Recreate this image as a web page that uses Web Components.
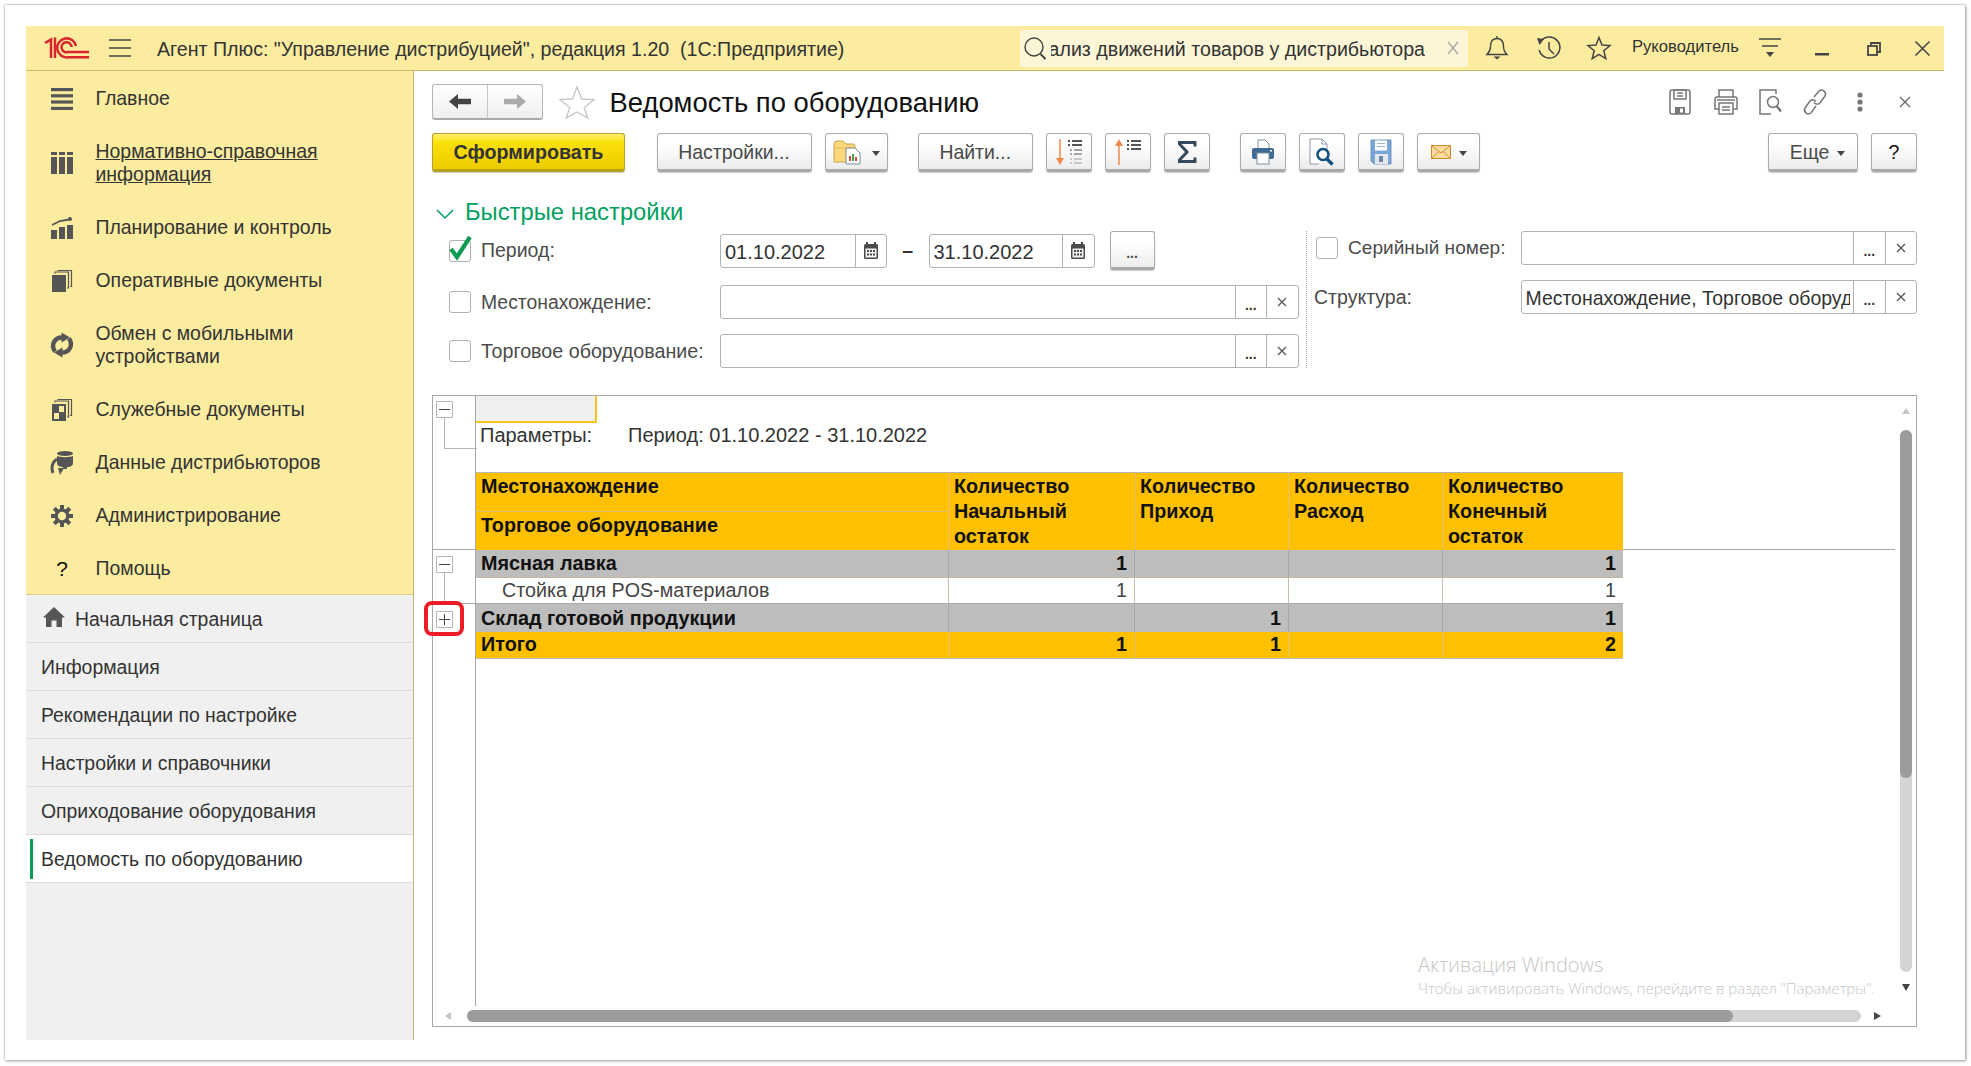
<!DOCTYPE html>
<html lang="ru"><head><meta charset="utf-8"><title>Ведомость по оборудованию</title>
<style>
html,body{margin:0;padding:0;background:#fff;width:1971px;height:1066px;overflow:hidden}
body{font-family:"Liberation Sans",Arial,sans-serif;font-size:19.5px;color:#333}
</style>
<script>
const gearTeeth=[0,45,90,135].map(a=>`<rect x="9" y="0" width="4" height="22" fill="currentColor" transform="rotate(${a} 11 11)"/>`).join('');
const ICONS={
 logo:[44,22,`<g fill="none" stroke="#d9252b" stroke-width="2.5"><path d="M0 6 L6 2.4V21M10 0.5V21"/><path d="M31 9A9.5 9.5 0 1 0 23 20.3H44"/><path d="M26.5 10A5 5 0 1 0 23 15H44"/></g>`],
 burger:[22,18,`<g stroke="#444" stroke-width="1.4"><path d="M0 1h22M0 9h22M0 17h22"/></g>`],
 search:[23,23,`<g fill="none" stroke="#444" stroke-width="1.4"><circle cx="10" cy="10" r="9"/><path d="M16.5 17l5 5" stroke-width="2"/></g>`],
 clear:[12,14,`<path d="M1 1l10 12M11 1L1 13" stroke="#aaa" stroke-width="1.4" fill="none"/>`],
 bell:[22,24,`<g fill="none" stroke="#444" stroke-width="1.4"><path d="M11 2.5c-5 0-6.500 4-6.500 8 0 4-1.500 6-3.500 8h20c-2-2-3.500-4-3.500-8 0-4-1.500-8-6.500-8z"/><path d="M11 0v2.500"/></g><path d="M7.500 20.500h7l-3.500 3z" fill="#444"/>`],
 history:[24,24,`<g fill="none" stroke="#444" stroke-width="1.5"><path d="M3.500 6A10.500 10.500 0 1 1 2.200 14"/><path d="M12 6v7l5 5"/></g><path d="M0 2l7 1-4.500 6z" fill="#444"/>`],
 star:[24,24,`<path d="M12 1.500l3 7.500 8 .6-6.200 5.200 2 7.900L12 18.400l-6.800 4.300 2-7.900L1 9.600l8-.6z" fill="none" stroke="#444" stroke-width="1.5"/>`],
 funnel:[22,21,`<g stroke="#444" stroke-width="1.4"><path d="M0 1h22M3 8h16"/></g><path d="M7 14h8l-4 5z" fill="#444"/>`],
 min:[14,3,`<rect width="14" height="2.500" fill="#444"/>`],
 restore:[14,14,`<g fill="none" stroke="#444" stroke-width="1.800"><rect x="1" y="4" width="9" height="9"/><path d="M4 3V1h9v9h-2.500"/></g>`],
 close:[15,15,`<path d="M.5.5l14 14M14.500.5l-14 14" stroke="#444" stroke-width="1.500"/>`],
 main:[22,22,`<g fill="#555"><rect y="0" width="22" height="3.200"/><rect y="6.200" width="22" height="3.200"/><rect y="12.400" width="22" height="3.200"/><rect y="18.800" width="22" height="3.200"/></g>`],
 nsi:[22,22,`<g fill="#555"><rect width="6" height="3"/><rect x="8" width="6" height="3"/><rect x="16" width="6" height="3"/><rect y="5" width="6" height="17"/><rect x="8" y="5" width="6" height="17"/><rect x="16" y="5" width="6" height="17"/></g>`],
 plan:[22,22,`<g fill="#555"><rect y="13" width="6" height="9"/><rect x="8" y="10" width="6" height="12"/><rect x="16" y="8" width="6" height="14"/></g><path d="M1 8l8-4 9-1.500" fill="none" stroke="#555" stroke-width="1.800"/><circle cx="19" cy="2" r="2" fill="#555"/>`],
 docs:[20,22,`<rect x="0" y="5" width="14" height="17" fill="#555"/><path d="M3 3.500V2h13.500v16H15M6 1V.5h13.500v16H18" fill="none" stroke="#555" stroke-width="1.200"/>`],
 sync:[22,22,`<g fill="none" stroke="#555" stroke-width="4.400"><path d="M4 17.500C-.5 11 3.500 3.500 11 3.500"/><path d="M18 4.500C22.500 11 18.500 18.500 11 18.500"/></g><path d="M10.500 -1.500L19 3.500 10.500 8.500zM11.500 23.500L3 18.500 11.500 13.500z" fill="#555"/>`],
 svc:[20,22,`<rect x="0" y="5" width="14" height="17" fill="#555"/><rect x="7" y="7" width="5" height="6" fill="#fbeca0"/><rect x="2" y="14" width="5" height="6" fill="#fbeca0"/><path d="M3 3.500V2h13.500v16H15M6 1V.5h13.500v16H18" fill="none" stroke="#555" stroke-width="1.200"/>`],
 dist:[24,24,`<g fill="#555"><ellipse cx="15" cy="2.500" rx="8" ry="2.500"/><path d="M7 5c2 1.500 14 1.500 16 0v7c0 3-3 4-6 4v2h-4v-2c-3 0-6-1-6-4z"/></g><path d="M7 8A11 11 0 0 0 3 22" fill="none" stroke="#555" stroke-width="3"/><path d="M10 24l4-7h-6z" fill="#555"/>`],
 gear:[22,22,`<g style="color:#555">${gearTeeth}</g><circle cx="11" cy="11" r="7.500" fill="#555"/><circle cx="11" cy="11" r="4.200" fill="#fbeca0"/>`],
 home:[22,20,`<path d="M11 0L22 10.500h-3V20h-5.500v-6.500h-5V20H3v-9.500H0z" fill="#555"/>`],
 back:[22,15,`<path d="M0 7.500L9 0v4.800h13v5.400H9V15z" fill="#444"/>`],
 fwd:[22,15,`<path d="M22 7.500L13 0v4.800H0v5.400h13V15z" fill="#aaa"/>`],
 bigstar:[36,33,`<path d="M18 1l4.600 12L35 13.600l-9.700 8 3.400 10.400L18 26l-10.700 6 3.400-10.400-9.700-8L13.400 13z" fill="#fff" stroke="#c4c4c4" stroke-width="1.300"/>`],
 sSave:[22,26,`<g fill="none" stroke="#777" stroke-width="1.500"><rect x="1" y="1" width="20" height="24" rx="2"/><rect x="5" y="1" width="12" height="9"/><path d="M8 4h6M8 7h6"/></g><rect x="6" y="18" width="10" height="7" fill="#777"/><rect x="11" y="19.500" width="3" height="4" fill="#fff"/>`],
 sPrint:[24,26,`<g fill="none" stroke="#777" stroke-width="1.500"><path d="M5 8V1h14v7"/><path d="M5 20H1V10a2 2 0 0 1 2-2h18a2 2 0 0 1 2 2v10h-4"/><rect x="5" y="14" width="14" height="11"/><path d="M8 18h8M8 21h8M3 11h18"/></g>`],
 sPrev:[23,26,`<g fill="none" stroke="#777" stroke-width="1.500"><path d="M12 25H1V1h16v4"/><circle cx="14" cy="13" r="5.500"/><path d="M18 17.500l4 5" stroke-width="2.400"/></g>`],
 sLink:[24,26,`<g fill="none" stroke="#777" stroke-width="1.500"><path d="M11 8l5-6a4 4 0 0 1 6 5l-5 7a4 4 0 0 1-6-.5"/><path d="M13 17l-5 7a4 4 0 0 1-6-5l5-7a4 4 0 0 1 6 .5"/></g>`],
 sDots:[6,20,`<g fill="#777"><circle cx="3" cy="3" r="2.600"/><circle cx="3" cy="10" r="2.600"/><circle cx="3" cy="17" r="2.600"/></g>`],
 sClose:[12,12,`<path d="M1 1l10 10M11 1L1 11" stroke="#666" stroke-width="1.300"/>`],
 folder:[31,24,`<path d="M1 4q0-3 3-3h5q2 0 3 2l1 1h7q2 0 2 2v16H1z" fill="#fbd97a" stroke="#c9a24a"/><path d="M1 8h21" stroke="#e9b94f" stroke-width="1"/><path d="M13 8h9l5 5v11H13z" fill="#fff" stroke="#7c8d9a"/><g><rect x="16" y="16" width="2" height="5" fill="#d5493b"/><rect x="19" y="14" width="2" height="7" fill="#3fa34d"/><rect x="22" y="17" width="2" height="4" fill="#d5493b"/></g>`],
 sortD:[26,26,`<path d="M4 0v23" stroke="#f08a4b" stroke-width="1.500"/><path d="M0 19h8l-4 7z" fill="#f08a4b"/><g stroke="#555" stroke-width="1.800"><path d="M12 2h2M16 2h10M12 6h2M16 6h10"/></g><g stroke="#888" stroke-width="1.600"><path d="M14 11h2M18 11h8M14 15h2M18 15h8"/></g><g stroke="#bbb" stroke-width="1.600"><path d="M14 20h2M18 20h8M14 24h2M18 24h8"/></g>`],
 sortU:[26,26,`<path d="M4 3v23" stroke="#f08a4b" stroke-width="1.500"/><path d="M0 7h8l-4-7z" fill="#f08a4b"/><g stroke="#555" stroke-width="1.800"><path d="M12 2h2M16 2h10M12 6h2M16 6h10M12 10h2M16 10h10" /></g>`],
 sum:[18,22,`<path d="M17 5.500V1.500H1.500V3l7.500 8-7.500 8v1.500H17v-4" fill="none" stroke="#34495e" stroke-width="3"/>`],
 print:[22,26,`<path d="M6 10V1h7l4 4v5" fill="#fff" stroke="#7d8d9c"/><rect x="0" y="9" width="22" height="11" rx="2" fill="#3f6b94"/><rect x="18" y="11" width="2" height="1.500" fill="#fff"/><rect x="5" y="14" width="12" height="11" fill="#fff" stroke="#7d8d9c"/>`],
 prev:[24,27,`<path d="M17 13V5l-5-5H0v25h9" fill="#fff" stroke="#8a98a6"/><path d="M12 0v5h5" fill="none" stroke="#8a98a6"/><circle cx="13" cy="15.500" r="5.500" fill="#fff" stroke="#14507e" stroke-width="2.600"/><path d="M17 20l5.500 5.500" stroke="#14507e" stroke-width="3.400"/>`],
 save:[20,24,`<path d="M0 0h20v24H3l-3-3z" fill="#7ba7d8" stroke="#5b87b5" stroke-width=".8"/><rect x="4" y="0.500" width="12" height="10" fill="#fff"/><path d="M6 3.500h8M6 6.500h8" stroke="#9db4cd"/><rect x="4" y="14" width="13" height="10" fill="#e2e8ee"/><rect x="8" y="16" width="4" height="6" fill="#6c8aa8"/>`],
 mail:[20,14,`<rect x=".5" y=".5" width="19" height="13" fill="#fbdc9e" stroke="#cc8d2e"/><path d="M.5.5L10 8 19.500.5M.5 13.500L8 6.500M19.500 13.500L12 6.500" fill="none" stroke="#cc8d2e"/>`],
 cal:[14,17,`<rect x="0" y="2" width="14" height="15" rx="1.500" fill="#4a4a4a"/><rect x="2" y="0" width="2" height="4" fill="#4a4a4a"/><rect x="10" y="0" width="2" height="4" fill="#4a4a4a"/><rect x="1.500" y="6.500" width="11" height="9" fill="#f4f4f4"/><g fill="#4a4a4a"><rect x="3" y="8" width="2" height="2"/><rect x="6" y="8" width="2" height="2"/><rect x="9" y="8" width="2" height="2"/><rect x="3" y="11.500" width="2" height="2"/><rect x="6" y="11.500" width="2" height="2"/><rect x="9" y="11.500" width="2" height="2"/></g>`],
 chev:[18,10,`<path d="M1 1l8 8 8-8" fill="none" stroke="#00a060" stroke-width="1.500"/>`],
 check:[24,26,`<path d="M2 14l6 8L21 2" fill="none" stroke="#0b9a52" stroke-width="4.200"/>`],
 tx:[10,10,`<path d="M1 1l8 8M9 1L1 9" stroke="#555" stroke-width="1.300"/>`]
};
function def(name,render){customElements.define(name,class extends HTMLElement{connectedCallback(){if(this.shadowRoot)return;const r=this.attachShadow({mode:"open"});r.innerHTML=render(this)}})}
def('ui-icon',el=>{const[w,h,b]=ICONS[el.getAttribute('name')];return `<style>:host{display:inline-flex;flex:none;line-height:0}svg{display:block;overflow:visible}</style><svg width="${w}" height="${h}" viewBox="0 0 ${w} ${h}">${b}</svg>`});

def('app-window',()=>`<style>:host{display:block;box-sizing:border-box;width:1960px;height:1055px;margin:5px 0 0 5px;padding:21px 21px 20px;background:#fff;box-shadow:0 0 2px #9a9a9a,1px 1px 3px #aaa}
.col{display:flex;flex-direction:column;height:100%}.row{display:flex;flex:1;min-height:0}</style>
<div class="col"><slot name="head"></slot><div class="row"><slot name="side"></slot><slot name="main"></slot></div></div>`);

def('app-header',()=>`<style>:host{display:flex;align-items:center;box-sizing:border-box;height:45px;width:1918px;flex:none;background:#fbeca0;border-bottom:1px solid #cdb968;color:#333;font-size:19.600px}
.logo{margin-left:19px}.burger{margin-left:20px}.title{margin-left:26px;white-space:pre;width:863px;padding-top:2px}
.search{box-sizing:border-box;display:flex;align-items:center;width:448px;height:37px;background:#fdf6d6;border-radius:3px;padding-left:4px}
.q{flex:none;display:flex;justify-content:flex-end;overflow:hidden;width:374px;margin-left:4px;white-space:nowrap;padding-top:2px}
.x{margin-left:22px}.bell{margin-left:18px}.hist{margin-left:29px}.star{margin-left:26px}
.user{margin-left:21px;font-size:16.600px;width:106px;position:relative;top:-1px;white-space:nowrap}.fun{margin-left:21px}.min{margin-left:34px;margin-top:13px}.res{margin-left:38px;margin-top:2px}.cl{margin-left:34px}</style>
<ui-icon class="logo" name="logo"></ui-icon><ui-icon class="burger" name="burger"></ui-icon>
<span class="title">Агент Плюс: "Управление дистрибуцией", редакция 1.20  (1С:Предприятие)</span>
<div class="search"><ui-icon name="search"></ui-icon><div class="q"><span>Анализ движений товаров у дистрибьютора</span></div><ui-icon class="x" name="clear"></ui-icon></div>
<ui-icon class="bell" name="bell"></ui-icon><ui-icon class="hist" name="history"></ui-icon><ui-icon class="star" name="star"></ui-icon>
<span class="user">Руководитель</span><ui-icon class="fun" name="funnel"></ui-icon><ui-icon class="min" name="min"></ui-icon><ui-icon class="res" name="restore"></ui-icon><ui-icon class="cl" name="close"></ui-icon>`);

def('side-bar',()=>`<style>:host{display:flex;flex-direction:column;box-sizing:border-box;width:388px;flex:none;background:#f0f0f0;border-right:1px solid #c4b878}
.sec{background:#fbeca0;border-bottom:1px solid #d9cb8a;height:522px;padding-top:1px}</style><div class="sec"><slot name="sec"></slot></div><slot></slot>`);

def('nav-item',el=>`<style>:host{display:flex;align-items:center;padding:15px 0 15px 25px;color:#333;line-height:23px;font-size:19.450px}
.i{width:22px;height:23px;display:flex;align-items:center;justify-content:center;flex:none;margin-right:22.500px}.q{font-size:21px;color:#111;line-height:22px}
.u{text-decoration:${el.hasAttribute('link')?'underline':'none'}}</style>
<span class="i">${el.getAttribute('icon')==='q'?'<span class="q">?</span>':`<ui-icon name="${el.getAttribute('icon')}"></ui-icon>`}</span><span class="u"><slot></slot></span>`);

def('tab-item',el=>{const act=el.hasAttribute('active');return `<style>:host{display:flex;align-items:center;box-sizing:border-box;height:48px;border-bottom:1px solid #dcdcdc;padding:2px 0 0 15px;position:relative;font-size:19.400px;background:${act?'#fff':'transparent'}}
.bar{width:3px;position:absolute;left:3.500px;top:4px;bottom:3px;background:#0a9b55}ui-icon{margin:-5px 10px 0 2px}</style>
${act?'<span class="bar"></span>':''}${el.getAttribute('icon')?`<ui-icon name="${el.getAttribute('icon')}"></ui-icon>`:''}<slot></slot>`});

def('tool-btn',el=>{const p=el.hasAttribute('primary');return `<style>:host{display:inline-flex;align-items:center;justify-content:center;box-sizing:border-box;flex:none;height:39px;padding-top:1px;border-radius:3px;border:1px solid ${p?'#b8a22e':'#ababab'};border-bottom:3px solid ${p?'#b7a11a':'#a9a9a9'};
background:${p?'linear-gradient(#fff06a 0,#fbe10a 25%,#eccb00 100%)':'linear-gradient(#fff 30%,#ececec)'};color:${p?'#333':'#4a4a4a'};font-weight:${p?'bold':'normal'};font-size:${p?'19.700px':'19.450px'};box-shadow:0 1px 1px #ccc;white-space:nowrap}
.tri{display:inline-block;width:0;height:0;border:4.500px solid transparent;border-top:5px solid #444;border-bottom:0;margin-left:8px;margin-top:3px}</style><slot></slot>${el.hasAttribute('menu')?'<span class="tri"></span>':''}`});

def('check-box',el=>`<style>:host{display:inline-block;flex:none;box-sizing:border-box;width:22px;height:22px;border:1px solid #b0b0b0;border-radius:3px;background:#fff;position:relative}
ui-icon{position:absolute;left:-1px;top:-6px}</style>${el.hasAttribute('checked')?'<ui-icon name="check"></ui-icon>':''}`);

def('text-field',el=>{const b=(el.getAttribute('btn')||'').split(' ').filter(Boolean);const cell=k=>`<span class="b">${k==='cal'?'<ui-icon name="cal"></ui-icon>':k==='dots'?'<b class="d">...</b>':'<ui-icon name="tx"></ui-icon>'}</span>`;
return `<style>:host{display:flex;box-sizing:border-box;height:34px;flex:none;border:1px solid #b2b2b2;border-radius:3px;background:#fff;color:#333}
.v{flex:1;min-width:0;overflow:hidden;white-space:nowrap;padding-left:4px;margin-right:3px;line-height:34px;height:32px}
.b{flex:none;width:30.500px;border-left:1px solid #b2b2b2;display:flex;align-items:center;justify-content:center}.d{font-size:14px;color:#333;position:relative;top:3px}</style>
<span class="v">${el.getAttribute('value')||''}</span>${b.map(cell).join('')}`});

def('page-main',()=>`<style>:host{display:block;box-sizing:border-box;width:1530px;padding:13px 27px 0 18px}</style><slot></slot>`);

def('title-row',()=>`<style>:host{display:flex;align-items:center;height:36px}
.nav{box-sizing:border-box;width:110.500px;height:36px;display:flex;border:1px solid #b4b4b4;border-bottom:2px solid #aaa;border-radius:3px;background:linear-gradient(#fff,#efefef)}
.nav span{flex:1;display:flex;align-items:center;justify-content:center}.nav span+span{border-left:1px solid #c8c8c8}
.st{margin-left:16px}.t{margin-left:15px;font-size:27.400px;color:#111;flex:1;white-space:nowrap;padding-top:1px}.r{display:flex;align-items:center;margin-right:6px}
.i2{margin-left:23px}.i3{margin-left:21px}.i4{margin-left:21px}.i5{margin-left:30px}.i6{margin-left:36px}</style>
<div class="nav"><span><ui-icon name="back"></ui-icon></span><span><ui-icon name="fwd"></ui-icon></span></div>
<ui-icon class="st" name="bigstar"></ui-icon><span class="t">Ведомость по оборудованию</span>
<div class="r"><ui-icon name="sSave"></ui-icon><ui-icon class="i2" name="sPrint"></ui-icon><ui-icon class="i3" name="sPrev"></ui-icon><ui-icon class="i4" name="sLink"></ui-icon><ui-icon class="i5" name="sDots"></ui-icon><ui-icon class="i6" name="sClose"></ui-icon></div>`);

def('tool-bar',()=>`<style>:host{display:flex;margin-top:13px;height:39px}</style><slot></slot>`);

def('quick-head',()=>`<style>:host{display:flex;align-items:center;margin-top:27px;height:26px;color:#00a060;font-size:23.800px}ui-icon{margin:3px 11px 0 4px}</style><ui-icon name="chev"></ui-icon><slot></slot>`);

def('quick-form',()=>`<style>:host{display:flex;margin-top:6px;height:137px}
.l{box-sizing:border-box;width:875px;border-right:1px dotted #aaa;display:flex;flex-direction:column;gap:15px}
.rw{display:flex;align-items:center;flex:none}.lb{display:flex;align-items:center;flex:none;width:288px;padding-left:17px;box-sizing:border-box;color:#4b4b4b}.lb span{margin-left:10px;white-space:nowrap}
.dash{width:41.500px;text-align:center;flex:none;font-weight:bold}.rr{flex:1;padding-left:7px;display:flex;flex-direction:column;gap:15px}
.rb{display:flex;align-items:center;flex:none;width:206.500px;color:#4b4b4b;white-space:nowrap}.rb span{margin-left:10px}
.date{font-size:20px}.val{font-size:19.450px}</style>
<div class="l">
 <div class="rw" style="height:39px"><div class="lb"><check-box checked></check-box><span style="font-size:19.500px">Период:</span></div><text-field class="date" value="01.10.2022" btn="cal" style="width:167px"></text-field><span class="dash">–</span><text-field class="date" value="31.10.2022" btn="cal" style="width:166px"></text-field><tool-btn style="width:45px;margin-left:15px"><b style="font-size:14px;position:relative;top:3px">...</b></tool-btn></div>
 <div class="rw" style="height:34px"><div class="lb"><check-box></check-box><span style="font-size:19.400px">Местонахождение:</span></div><text-field btn="dots clear" style="width:578.500px"></text-field></div>
 <div class="rw" style="height:34px"><div class="lb"><check-box></check-box><span style="font-size:19.700px">Торговое оборудование:</span></div><text-field btn="dots clear" style="width:578.500px"></text-field></div>
</div>
<div class="rr">
 <div class="rw" style="height:34px"><div class="rb"><check-box style="margin-left:2px"></check-box><span style="font-size:19.100px">Серийный номер:</span></div><text-field btn="dots clear" style="width:396.500px"></text-field></div>
 <div class="rw" style="height:34px"><div class="rb">Структура:</div><text-field class="val" value="Местонахождение, Торговое оборудование" btn="dots clear" style="width:396.500px"></text-field></div>
</div>`);

def('tree-toggle',el=>`<style>:host{display:block;box-sizing:border-box;width:17px;height:17px;margin-left:3px;border:1px solid #b4b4b4;border-radius:1px;background:#fff;flex:none}svg{display:block}</style>
<svg width="15" height="15" viewBox="0 0 15 15"><path d="M2 7.500h11${el.getAttribute('state')==='plus'?'M7.500 2v11':''}" stroke="#444" stroke-width="1"/></svg>`);

def('report-sheet',()=>{
 const c=(t,cl='')=>`<div class="c ${cl}">${t}</div>`;
 const row=(kind,a,v)=>`${c(a,'first')}${v.map(x=>c(x,'n')).join('')}`;
 return `<style>:host{display:flex;flex-direction:column;height:100%;--cols:43px 472px 186px 154px 154px 181px;font-size:19.700px;color:#111;line-height:25px}
.g{box-sizing:border-box;border-right:1px solid #a8a8a8;position:relative;display:flex;flex-direction:column}
.gl{margin-left:11px;border-left:1px solid #b4b4b4;flex:none}
.rw{display:grid;grid-template-columns:var(--cols) 1fr;flex:none}
.top{height:76px;display:flex}.top .g{width:43px;padding-top:5px}
.box{box-sizing:border-box;width:121px;height:27px;background:#f0f0f0;border-right:2px solid #fcc21c;border-bottom:2px solid #fcc21c}
.par{display:flex;padding-left:4px;height:24px;line-height:24px;color:#333;white-space:nowrap;font-size:20px}.par span:first-child{width:148px}
.hd{height:77px;border-bottom:1px solid #a8a8a8}
.hc{background:#ffc000;font-weight:bold;font-size:19.800px;border-left:1px solid #dfc171;padding:1px 0 0 5px;border-top:1px solid #b5b5b5;box-sizing:border-box;white-space:nowrap}
.h1{padding:0;border-left:0;display:flex;flex-direction:column}.h1 div{box-sizing:border-box;height:38.500px;padding:1px 0 0 5px;line-height:25px}.h1 div:first-child{border-bottom:1px solid #dfc171}
.c{box-sizing:border-box;padding:0 7px 0 5px;display:flex;align-items:center;white-space:nowrap;border-left:1px solid transparent}.first{border-left:0}.n{justify-content:flex-end}
.gray .c{background:#bdbdbd;font-weight:bold;font-size:19.800px;border-bottom:1px solid #c4b79f}.gray .n{border-left-color:#a9a9a9}
.white .c{background:#fff;color:#444;border-bottom:1px solid #aaa}.white .n{border-left-color:#cabfae}.white .first{padding-left:26px}
.tot .c{background:#ffc000;font-weight:bold;font-size:19.800px;border-bottom:1px solid #c0c0c0}.tot .n{border-left-color:#dfc171}
.gray2 .c{border-bottom:0}
.rest{flex:1;display:flex}.rest .g{width:43px}
.hl{position:absolute;box-sizing:border-box;left:-9px;top:-3px;width:40px;height:35px;border:4px solid #ed1c24;border-radius:8px}
</style>
<div class="top"><div class="g"><tree-toggle></tree-toggle><div class="gl" style="height:30px;width:32px;border-bottom:1px solid #b4b4b4"></div></div>
 <div><div class="box"></div><div class="par"><span>Параметры:</span><span>Период: 01.10.2022 - 31.10.2022</span></div></div></div>
<div class="rw hd"><div class="g"></div>
 <div class="hc h1"><div>Местонахождение</div><div>Торговое оборудование</div></div>
 <div class="hc">Количество<br>Начальный<br>остаток</div><div class="hc">Количество<br>Приход</div><div class="hc">Количество<br>Расход</div><div class="hc">Количество<br>Конечный<br>остаток</div></div>
<div class="rw gray" style="height:28px"><div class="g" style="padding-top:6px"><tree-toggle></tree-toggle><div class="gl" style="height:5px"></div></div>${row('',"Мясная лавка",['1','','','1'])}</div>
<div class="rw white" style="height:26px"><div class="g" style="border-bottom:1px solid #aaa"><div class="gl" style="flex:1"></div></div>${row('',"Стойка для POS-материалов",['1','','','1'])}</div>
<div class="rw gray gray2" style="height:28px"><div class="g" style="padding-top:7px"><tree-toggle state="plus"></tree-toggle><span class="hl"></span></div>${row('',"Склад готовой продукции",['','1','','1'])}</div>
<div class="rw tot" style="height:26.500px"><div class="g"></div>${row('',"Итого",['1','1','','2'])}</div>
<div class="rest"><div class="g"></div></div>`});

def('v-scroll',()=>`<style>:host{display:flex;flex-direction:column;align-items:center;height:100%;padding-top:12px;box-sizing:border-box}
.up,.dn{width:0;height:0;border:4px solid transparent;flex:none}.up{border-bottom:6px solid #c4c4c4;border-top:0}.dn{border-top:7px solid #444;border-bottom:0;margin-top:12px}
.tr{width:12px;height:542px;margin-top:16px;background:#d4d4d4;border-radius:6px;flex:none}.th{height:348px;background:#9b9b9b;border-radius:6px}</style><span class="up"></span><div class="tr"><div class="th"></div></div><span class="dn"></span>`);

def('h-scroll',()=>`<style>:host{display:flex;align-items:center;height:100%;padding:0 0 0 12px;box-sizing:border-box}
.l,.r{width:0;height:0;border:4px solid transparent;flex:none}.l{border-right:6px solid #c4c4c4;border-left:0}.r{border-left:7px solid #444;border-right:0;margin-left:13px}
.tr{width:1394px;height:12px;margin-left:16px;background:#d4d4d4;border-radius:6px;flex:none;margin-top:0}.th{width:1266px;height:12px;background:#9b9b9b;border-radius:6px}</style><span class="l"></span><div class="tr"><div class="th"></div></div><span class="r"></span>`);

def('win-mark',()=>`<style>:host{position:absolute;left:985px;top:555px;font-family:"Open Sans","Liberation Sans",sans-serif;font-weight:300;color:#c6c6c6;white-space:nowrap}
.a{font-size:20px;line-height:28px}.b{font-size:15px;line-height:19px}</style><div class="a">Активация Windows</div><div class="b">Чтобы активировать Windows, перейдите в раздел "Параметры".</div>`);

def('report-panel',()=>`<style>:host{display:grid;position:relative;box-sizing:border-box;margin-top:27px;height:632px;grid-template-columns:1fr 21px;grid-template-rows:1fr 20px;border:1px solid #a8a8a8;background:#fff}</style><slot></slot>`);
</script></head>
<body>
<app-window>
 <app-header slot="head"></app-header>
 <side-bar slot="side">
  <div slot="sec">
   <nav-item icon="main">Главное</nav-item>
   <nav-item icon="nsi" link>Нормативно-справочная<br>информация</nav-item>
   <nav-item icon="plan">Планирование и контроль</nav-item>
   <nav-item icon="docs">Оперативные документы</nav-item>
   <nav-item icon="sync">Обмен с мобильными<br>устройствами</nav-item>
   <nav-item icon="svc">Служебные документы</nav-item>
   <nav-item icon="dist">Данные дистрибьюторов</nav-item>
   <nav-item icon="gear">Администрирование</nav-item>
   <nav-item icon="q">Помощь</nav-item>
  </div>
  <tab-item icon="home">Начальная страница</tab-item>
  <tab-item>Информация</tab-item>
  <tab-item>Рекомендации по настройке</tab-item>
  <tab-item>Настройки и справочники</tab-item>
  <tab-item>Оприходование оборудования</tab-item>
  <tab-item active>Ведомость по оборудованию</tab-item>
 </side-bar>
 <page-main slot="main">
  <title-row></title-row>
  <tool-bar>
   <tool-btn primary style="width:193px">Сформировать</tool-btn>
   <tool-btn style="width:155px;margin-left:31.500px">Настройки...</tool-btn>
   <tool-btn menu style="width:63px;margin-left:13.500px"><ui-icon name="folder"></ui-icon></tool-btn>
   <tool-btn style="width:114.500px;margin-left:30px">Найти...</tool-btn>
   <tool-btn style="width:46px;margin-left:13.500px"><ui-icon name="sortD"></ui-icon></tool-btn>
   <tool-btn style="width:46px;margin-left:13px"><ui-icon name="sortU"></ui-icon></tool-btn>
   <tool-btn style="width:46px;margin-left:13px"><ui-icon name="sum"></ui-icon></tool-btn>
   <tool-btn style="width:46px;margin-left:30px"><ui-icon name="print"></ui-icon></tool-btn>
   <tool-btn style="width:46px;margin-left:13px"><ui-icon name="prev"></ui-icon></tool-btn>
   <tool-btn style="width:46px;margin-left:13px"><ui-icon name="save"></ui-icon></tool-btn>
   <tool-btn menu style="width:63px;margin-left:13px"><ui-icon name="mail"></ui-icon></tool-btn>
   <tool-btn menu style="width:90px;margin-left:auto;padding-left:9px">Еще</tool-btn>
   <tool-btn style="width:46px;margin-left:13px;color:#111">?</tool-btn>
  </tool-bar>
  <quick-head>Быстрые настройки</quick-head>
  <quick-form></quick-form>
  <report-panel>
   <report-sheet></report-sheet>
   <v-scroll></v-scroll>
   <h-scroll></h-scroll>
   <span></span>
   <win-mark></win-mark>
  </report-panel>
 </page-main>
</app-window>
</body></html>
